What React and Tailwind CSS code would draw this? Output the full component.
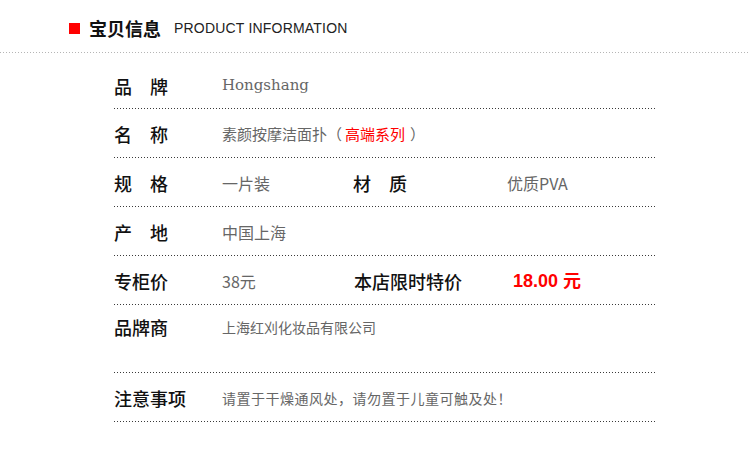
import React from "react";

const cjk = "font-['Noto_Sans_CJK_SC','Noto_Sans',sans-serif]";

function Dots({ light }) {
  return (
    <div
      className={
        light
          ? "h-px w-full bg-[linear-gradient(to_right,#b5b5b5_1px,transparent_1px)] bg-[length:3px_1px]"
          : "h-px w-full bg-[linear-gradient(to_right,#3a3a3a_1px,transparent_1px)] bg-[length:3px_1px]"
      }
    />
  );
}

function Label({ children }) {
  return <div className={`w-[108px] shrink-0 text-[18px] leading-[26px] font-medium text-[#111] ${cjk}`}>{children}</div>;
}

function Value({ children, className = "" }) {
  return <div className={`leading-[22px] text-[#666] ${cjk} ${className}`}>{children}</div>;
}

export default function App() {
  return (
    <div className="w-[750px] h-[466px] bg-white">
      {/* header */}
      <div className="flex items-center h-[52px] pl-[69px] pt-[5px]">
        <div className="w-[11px] h-[11px] bg-[#ff0000]" />
        <span className={`ml-[9px] text-[18px] font-bold text-[#111] ${cjk}`}>宝贝信息</span>
        <span className="ml-[13px] text-[14px] tracking-[0.2px] text-[#222] font-['Liberation_Sans',sans-serif]">PRODUCT INFORMATION</span>
      </div>
      <Dots light />

      <div className="ml-[114px] w-[541px] mt-[7px]">
        <div className="flex items-center h-[48px] pt-[3px]">
          <Label>品　牌</Label>
          <div className="text-[15px] text-[#666] font-['DejaVu_Serif',serif]">Hongshang</div>
        </div>
        <Dots />

        <div className="flex items-center h-[48px] pt-[2px]">
          <Label>名　称</Label>
          <Value className="text-[15px]">
            素颜按摩洁面扑（<span className="ml-[3px] mr-[5px] text-[#ff0000]">高端系列</span>）
          </Value>
        </div>
        <Dots />

        <div className="flex items-center h-[48px] pt-[2px]">
          <Label>规　格</Label>
          <Value className="w-[131px] text-[16px]">一片装</Value>
          <div className={`w-[154px] shrink-0 text-[18px] leading-[26px] font-medium text-[#111] ${cjk}`}>材　质</div>
          <Value className="text-[16px]">优质PVA</Value>
        </div>
        <Dots />

        <div className="flex items-center h-[48px] pt-[2px]">
          <Label>产　地</Label>
          <Value className="text-[16px]">中国上海</Value>
        </div>
        <Dots />

        <div className="flex items-center h-[48px] pt-[2px]">
          <Label>专柜价</Label>
          <Value className="w-[132px] text-[16px]">38元</Value>
          <div className={`w-[159px] shrink-0 text-[18px] leading-[26px] font-medium text-[#111] ${cjk}`}>本店限时特价</div>
          <div className={`text-[18px] font-bold text-[#ff0000] font-['Liberation_Sans','Noto_Sans_CJK_SC',sans-serif]`}>18.00 元</div>
        </div>
        <Dots />

        <div className="flex items-start h-[67px] pt-[9px]">
          <Label>品牌商</Label>
          <Value className="pt-[2px] text-[14px]">上海红刈化妆品有限公司</Value>
        </div>
        <Dots />

        <div className="flex items-center h-[48px] pt-[2px]">
          <Label>注意事项</Label>
          <Value className="text-[14px] tracking-[0.5px]">请置于干燥通风处，请勿置于儿童可触及处！</Value>
        </div>
        <Dots />
      </div>
    </div>
  );
}
